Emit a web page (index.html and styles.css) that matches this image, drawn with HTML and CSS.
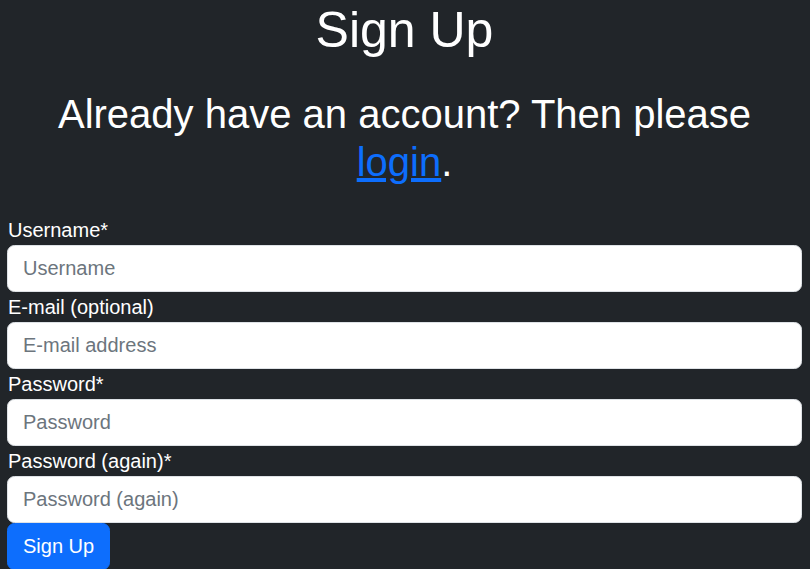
FILE: index.html
```html
<!DOCTYPE html>
<html lang="en">
<head>
<meta charset="utf-8">
<title>Sign Up</title>
<link rel="stylesheet" href="styles.css">
</head>
<body>
<main class="page">
  <h1 class="title">Sign Up</h1>
  <h2 class="subtitle">Already have an account? Then please <a href="#" class="link">login</a>.</h2>
  <form class="form">
    <label class="label" for="username">Username*</label>
    <input class="input" id="username" type="text" placeholder="Username">
    <label class="label" for="email">E-mail (optional)</label>
    <input class="input" id="email" type="email" placeholder="E-mail address">
    <label class="label" for="password1">Password*</label>
    <input class="input" id="password1" type="password" placeholder="Password">
    <label class="label" for="password2">Password (again)*</label>
    <input class="input" id="password2" type="password" placeholder="Password (again)">
    <button class="btn" type="submit">Sign Up</button>
  </form>
</main>
</body>
</html>
```
FILE: styles.css
```css
html, body {
  margin: 0;
  padding: 0;
  background: #212529;
}
body {
  font-family: "Liberation Sans", Arial, sans-serif;
  color: #ffffff;
  font-size: 20px;
  line-height: 30px;
}
.page {
  padding: 0 8px 0 7px;
}
.title {
  margin: 0 0 30px;
  font-size: 50px;
  line-height: 60px;
  font-weight: 400;
  text-align: center;
}
.subtitle {
  margin: 0 0 29px;
  font-size: 40px;
  line-height: 48px;
  font-weight: 400;
  text-align: center;
}
.link {
  color: #0d6efd;
  text-decoration: underline;
}
.form {
  display: flex;
  flex-direction: column;
  align-items: stretch;
}
.label {
  display: block;
  height: 30px;
  line-height: 30px;
  padding-left: 1px;
}
.input {
  box-sizing: border-box;
  height: 47px;
  padding: 0 15px;
  border: 1px solid #dee2e6;
  border-radius: 7.5px;
  background: #ffffff;
  color: #212529;
  font-family: "Liberation Sans", Arial, sans-serif;
  font-size: 20px;
  outline: none;
}
.input::placeholder {
  color: #6c757d;
  opacity: 1;
}
.btn {
  align-self: flex-start;
  box-sizing: border-box;
  height: 47px;
  padding: 0 15px;
  border: 1px solid #0d6efd;
  border-radius: 7.5px;
  background: #0d6efd;
  color: #ffffff;
  font-family: "Liberation Sans", Arial, sans-serif;
  font-size: 20px;
  cursor: pointer;
}
```
